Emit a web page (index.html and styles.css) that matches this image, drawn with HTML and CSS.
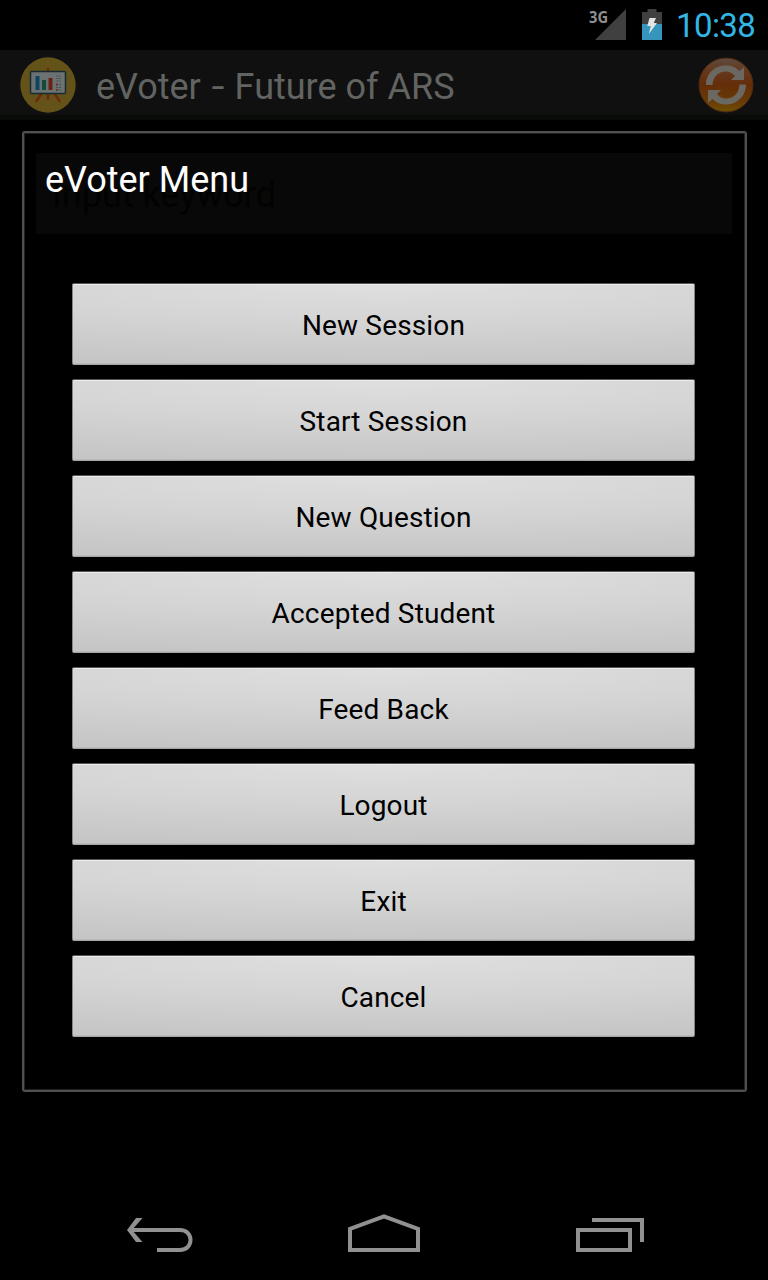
FILE: index.html
```html
<!DOCTYPE html>
<html lang="en">
<head>
<meta charset="utf-8">
<title>eVoter</title>
<link rel="stylesheet" href="styles.css">
</head>
<body>
<div class="screen">
  <header class="status">
    <svg class="signal" width="40" height="34" viewBox="0 0 40 34">
      <path d="M38 3V34H7Z" fill="#404040"/>
      <text class="network" x="1" y="16.500" textLength="19" lengthAdjust="spacingAndGlyphs">3G</text>
    </svg>
    <svg class="battery" width="20" height="31" viewBox="0 0 20 31">
      <path d="M0 3H5.500V0H14.500V3H20V15H0Z" fill="#404040"/>
      <path d="M0 15H20V31H0Z" fill="#3595bd"/>
      <path d="M7.500 9H14L11.800 14H15L6.800 25L8.800 17H5.300Z" fill="#e4e4e4"/>
    </svg>
    <time class="clock">10:38</time>
  </header>
  <div class="actionbar">
    <svg class="app-icon" width="56" height="56" viewBox="0 0 56 56">
      <circle cx="28" cy="28" r="27.700" fill="#645318"/>
      <path d="M28 12V16M28 37V42M21 37L16.500 44M35 37L39.500 44" stroke="#70280f" stroke-width="2.500" stroke-linecap="round"/>
      <rect x="10.500" y="14.500" width="35" height="22" rx="1" fill="#6c7272" stroke="#152b32" stroke-width="1.500"/>
      <path d="M15.500 19H19.500V33H15.500Z" fill="#0c4564"/>
      <path d="M22 23H26V33H22Z" fill="#134b3d"/>
      <path d="M28.500 21H32.500V33H28.500Z" fill="#6c2015"/>
      <path d="M36 19H41M36 21.500H41M36 24H41" stroke="#515858"/>
      <path d="M36 27.500H38M36 33H38" stroke="#6c2015" stroke-width="1.500"/>
      <path d="M36 30.300H38M39 27.500H41M39 30.300H41M39 33H41" stroke="#38585b" stroke-width="1.200"/>
    </svg>
    <h1 class="app-title">eVoter <span class="dash">-</span> Future of ARS</h1>
    <svg class="refresh" width="56" height="56" viewBox="0 0 56 56">
      <defs>
        <linearGradient id="orb" x1="0" y1="0" x2="0" y2="1">
          <stop offset="0" stop-color="#5e4c40"/>
          <stop offset=".22" stop-color="#65391f"/>
          <stop offset=".5" stop-color="#642d08"/>
          <stop offset=".8" stop-color="#693a06"/>
          <stop offset="1" stop-color="#705000"/>
        </linearGradient>
      </defs>
      <circle cx="28" cy="28" r="27" fill="url(#orb)" stroke="#4b2a10"/>
      <g fill="#6b6862">
        <path d="M8 28C8 16 17 8.500 28 8.500C34 8.500 38 10.500 41.500 14L46 10V23H33L37 19C34.500 16 31.500 14.500 28 14.500C20 14.500 15 20 14.500 28Z"/>
        <path d="M48 27.500C48 39 39 47.500 28 47.500C22 47.500 18 45.500 14.500 42L10 46V33H23L19 37C21.500 40 24.500 41.500 28 41.500C36 41.500 41 36 41.500 27.500Z"/>
      </g>
    </svg>
  </div>
  <main class="content">
    <div class="search">Input keyword</div>
  </main>
  <nav class="navbar">
    <svg class="nav-icon" width="76" height="40" viewBox="0 0 76 40">
      <path d="M12 16H62C76 16 76 36 62 36H39" fill="none" stroke="#919191" stroke-width="4"/>
      <path d="M18 4H24.500L14 16L24.500 28H18L9 16Z" fill="#919191"/>
    </svg>
    <svg class="nav-icon" width="76" height="40" viewBox="0 0 76 40">
      <path d="M4 36V14.800L38 2.300L72 14.800V36Z" fill="none" stroke="#919191" stroke-width="4"/>
    </svg>
    <svg class="nav-icon" width="76" height="40" viewBox="0 0 76 40">
      <path d="M4 16H56V36H4ZM18 6H68V28" fill="none" stroke="#919191" stroke-width="4"/>
    </svg>
  </nav>
  <section class="dialog">
    <h2 class="dialog-title">eVoter Menu</h2>
    <div class="menu">
      <button class="item">New Session</button>
      <button class="item">Start Session</button>
      <button class="item">New Question</button>
      <button class="item">Accepted Student</button>
      <button class="item">Feed Back</button>
      <button class="item">Logout</button>
      <button class="item">Exit</button>
      <button class="item">Cancel</button>
    </div>
  </section>
</div>
</body>
</html>
```
FILE: styles.css
```css
* { box-sizing: border-box; }
body { margin: 0; background: #000; font-family: Roboto, sans-serif; }
.screen {
  position: relative;
  display: flex;
  flex-direction: column;
  width: 768px;
  height: 1280px;
  overflow: hidden;
  background: #000;
}
.status {
  display: flex;
  justify-content: flex-end;
  align-items: flex-start;
  height: 50px;
  padding: 0 14px 0 0;
}
.signal { margin: 6px 14px 0 0; overflow: visible; }
.network { font: bold 16.500px "Open Sans", sans-serif; fill: #909090; }
.battery { margin: 9px 14px 0 0; }
.clock { width: 78px; font-size: 33px; line-height: 52px; color: #33b5e5; letter-spacing: -0.600px; }
.actionbar {
  display: flex;
  align-items: center;
  height: 70px;
  padding: 0 14px 0 20px;
  background: #101010;
  border-bottom: 5px solid #090b09;
}
.app-icon, .refresh { position: relative; top: 2px; }
.app-title {
  flex: 1;
  margin: 9px 0 0 20px;
  font-size: 36px;
  font-weight: 400;
  line-height: 42px;
  color: #626462;
  white-space: nowrap;
}
.dash { display: inline-block; margin: 0 3px; transform: scaleX(1.300); }
.content { flex: 1; padding: 33px 36px 0; }
.search {
  height: 81px;
  padding: 0 16px;
  font-size: 36px;
  line-height: 84px;
  color: #010301;
  background: #080808;
}
.navbar {
  display: flex;
  justify-content: space-between;
  height: 96px;
  padding: 30px 118px 0;
}
.dialog {
  position: absolute;
  left: 22px;
  top: 131px;
  width: 725px;
  height: 961px;
  padding: 22px 50px 0 48px;
  border: 2px solid #505050;
  border-radius: 3px;
  box-shadow: inset 0 0 0 1px #222;
}
.dialog-title {
  margin: 4px 0 0 -27px;
  font-size: 36px;
  font-weight: 400;
  line-height: 42px;
  color: #fff;
}
.menu { display: flex; flex-direction: column; gap: 14px; margin-top: 82px; }
.item {
  height: 82px;
  padding: 2px 0 0;
  border: 1px solid #858785;
  border-top-color: #555;
  border-bottom-color: #a4a8a4;
  border-radius: 2px;
  background: radial-gradient(ellipse 150% 110% at 50% 0, #dfdfdf 0%, #d5d4d5 45%, #c6c6c6 90%);
  box-shadow: inset 0 1px #ececec, inset 0 -1px #b8b9b8;
  font: 28px Roboto, sans-serif;
  letter-spacing: 0.150px;
  color: #000;
}
```
